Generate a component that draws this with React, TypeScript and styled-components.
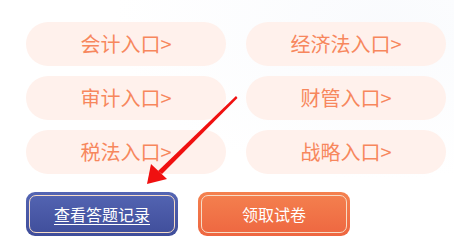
import React from "react";
import styled, { createGlobalStyle } from "styled-components";

const Global = createGlobalStyle`
  html, body { margin: 0; padding: 0; background: #ffffff; }
  body { font-family: "Noto Sans CJK SC", "Noto Sans", sans-serif; }
`;

const Page = styled.div`
  position: relative;
  width: 454px;
  height: 245px;
  box-sizing: border-box;
  padding: 22px 0 0 26px;
  overflow: hidden;
  background:
    radial-gradient(ellipse at 85% 10%, rgba(232, 238, 248, 0.25), rgba(255,255,255,0) 50%),
    #ffffff;
`;

const Grid = styled.div`
  display: grid;
  grid-template-columns: 200px 200px;
  column-gap: 20px;
  row-gap: 10px;
`;

const Pill = styled.div`
  height: 44px;
  border-radius: 22px;
  background: #fff1ec;
  color: #f7875d;
  font-size: 20px;
  display: flex;
  align-items: center;
  justify-content: center;
  line-height: 1;
`;

const Actions = styled.div`
  display: flex;
  gap: 20px;
  margin-top: 18px;
`;

const ActionButton = styled.div<{ $variant: "blue" | "orange" }>`
  width: 152px;
  height: 44px;
  box-sizing: border-box;
  border-radius: 9px;
  padding: 3px;
  background: ${(p) =>
    p.$variant === "blue"
      ? "linear-gradient(180deg, #5465b3 0%, #3f4d9a 100%)"
      : "linear-gradient(180deg, #f4814f 0%, #ee6640 100%)"};
  display: flex;
`;

const Inner = styled.div<{ $underline?: boolean }>`
  flex: 1;
  border: 1px solid #f6dcc6;
  border-radius: 7px;
  display: flex;
  align-items: center;
  justify-content: center;
  color: #ffffff;
  font-size: 16px;
  line-height: 1;
  text-decoration: ${(p) => (p.$underline ? "underline" : "none")};
  text-underline-offset: 3px;
`;

const Arrow = styled.svg`
  position: absolute;
  left: 0;
  top: 0;
  pointer-events: none;
`;

const entries = ["会计入口>", "经济法入口>", "审计入口>", "财管入口>", "税法入口>", "战略入口>"];

export default function App() {
  return (
    <>
      <Global />
      <Page>
        <Grid>
          {entries.map((e) => (
            <Pill key={e}>{e}</Pill>
          ))}
        </Grid>
        <Actions>
          <ActionButton $variant="blue">
            <Inner $underline>查看答题记录</Inner>
          </ActionButton>
          <ActionButton $variant="orange">
            <Inner>领取试卷</Inner>
          </ActionButton>
        </Actions>
        <Arrow width="454" height="245" viewBox="0 0 454 245">
          <polygon points="236,96 237.5,98 162,174 158,171" fill="#f01010" />
          <polygon points="147,184 151,164 167,179" fill="#f01010" />
        </Arrow>
      </Page>
    </>
  );
}
